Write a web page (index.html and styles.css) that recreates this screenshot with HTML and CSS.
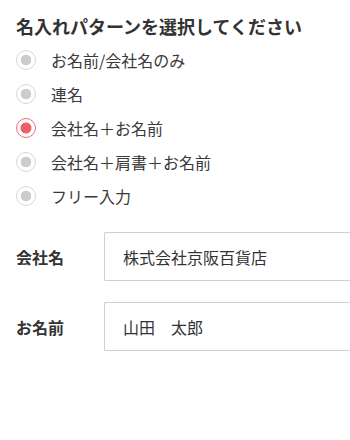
FILE: index.html
```html
<!DOCTYPE html>
<html lang="ja">
<head>
<meta charset="utf-8">
<title>名入れパターン</title>
<link rel="stylesheet" href="styles.css">
</head>
<body>
<div class="page">
  <h2 class="title">名入れパターンを選択してください</h2>
  <div class="options">
    <label class="option"><input class="radio" type="radio" name="pattern"><span>お名前/会社名のみ</span></label>
    <label class="option"><input class="radio" type="radio" name="pattern"><span>連名</span></label>
    <label class="option"><input class="radio" type="radio" name="pattern" checked><span>会社名＋お名前</span></label>
    <label class="option"><input class="radio" type="radio" name="pattern"><span>会社名＋肩書＋お名前</span></label>
    <label class="option"><input class="radio" type="radio" name="pattern"><span>フリー入力</span></label>
  </div>
  <div class="fields">
    <div class="field">
      <label class="field-label">会社名</label>
      <input class="field-input" type="text" value="株式会社京阪百貨店">
    </div>
    <div class="field">
      <label class="field-label">お名前</label>
      <input class="field-input" type="text" value="山田　太郎">
    </div>
  </div>
</div>
</body>
</html>
```
FILE: styles.css
```css
html, body {
  margin: 0;
  padding: 0;
  background: #fff;
  overflow: hidden;
}
body {
  font-family: "Noto Sans CJK JP", "Noto Sans", sans-serif;
  color: #333;
}
.page {
  padding: 13px 0 0 16px;
}
.title {
  margin: 0;
  font-size: 18px;
  line-height: 26px;
  font-weight: 700;
  color: #333;
  white-space: nowrap;
}
.options {
  margin-top: 4px;
  display: flex;
  flex-direction: column;
}
.option {
  display: flex;
  align-items: center;
  height: 34px;
  font-size: 16px;
  color: #3a3a3a;
}
.radio {
  appearance: none;
  -webkit-appearance: none;
  box-sizing: border-box;
  width: 20px;
  height: 20px;
  margin: 0 15px 0 0;
  border: 1px solid #d6d6d6;
  border-radius: 50%;
  background: radial-gradient(circle, #cccccc 0 5px, #fff 5.6px);
  flex: none;
}
.radio:checked {
  border-color: #ef6b75;
  background: radial-gradient(circle, #ef5f6b 0 5.2px, #fff 5.8px);
}
.fields {
  margin-top: 19px;
  display: flex;
  flex-direction: column;
  gap: 21px;
}
.field {
  display: flex;
  align-items: center;
}
.field-label {
  width: 88px;
  flex: none;
  font-size: 16px;
  font-weight: 700;
  color: #333;
}
.field-input {
  box-sizing: border-box;
  flex: 1;
  min-width: 0;
  height: 49px;
  margin: 0;
  padding: 0 0 0 18px;
  border: 1px solid #cfcfcf;
  border-right: 0;
  border-radius: 2px 0 0 2px;
  font-family: "Noto Sans CJK JP", "Noto Sans", sans-serif;
  font-size: 16px;
  color: #333;
  background: #fff;
  outline: none;
}
```
